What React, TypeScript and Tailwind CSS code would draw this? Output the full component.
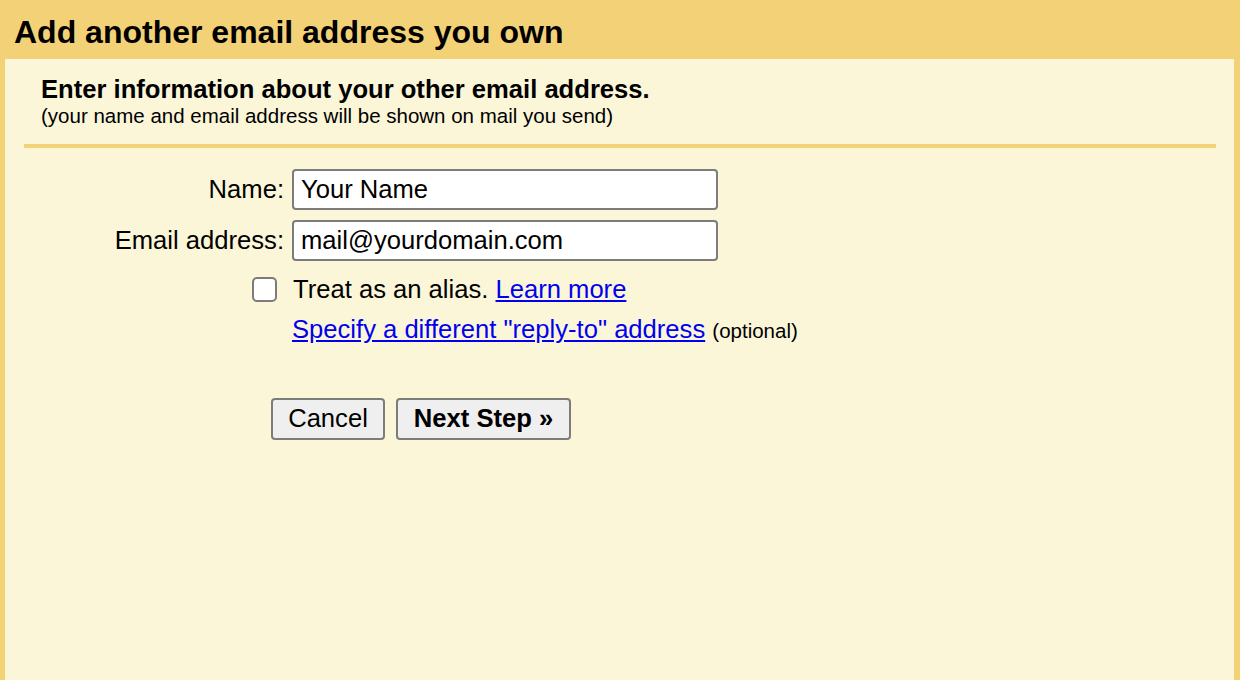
export default function App() {
  return (
    <div className="flex h-[680px] w-full flex-col overflow-hidden bg-[#f3d177] font-['Liberation_Sans',Arial,sans-serif] text-black">
      <div className="h-[59px] shrink-0 pl-[14px] pt-[16px]">
        <h1 className="text-[32px] font-bold leading-[32px]">Add another email address you own</h1>
      </div>

      <div className="ml-[5px] mr-[6px] flex-1 bg-[#fcf6d9] pt-[16px]">
        <div className="pl-[36px]">
          <h2 className="text-[25.6px] font-bold leading-[28px]">Enter information about your other email address.</h2>
          <p className="text-[20.5px] leading-[26px]">(your name and email address will be shown on mail you send)</p>
        </div>

        <div className="ml-[19px] mr-[18px] mt-[15px] h-[4px] bg-[#f3d177]" />

        <div className="mt-[21px] grid grid-cols-[279px_426px] gap-x-[8px] text-[25.6px]">
          <label className="flex h-[41px] items-center justify-end">Name:</label>
          <input
            type="text"
            defaultValue="Your Name"
            className="h-[41px] rounded-[4px] border-2 border-[#7c7c7c] bg-white px-[7px] text-[25.6px] outline-none"
          />

          <label className="mt-[10px] flex h-[41px] items-center justify-end">Email address:</label>
          <input
            type="text"
            defaultValue="mail@yourdomain.com"
            className="mt-[10px] h-[41px] rounded-[4px] border-2 border-[#7c7c7c] bg-white px-[7px] text-[25.6px] outline-none"
          />

          <div className="mt-[13px] flex h-[30px] items-center justify-end pr-[7px]">
            <span className="block h-[25px] w-[25px] rounded-[5px] border-2 border-[#7c7c7c] bg-white" />
          </div>
          <div className="mt-[13px] pl-[1px] leading-[30px]">
            Treat as an alias.{" "}
            <a href="#" className="text-[#0000ee] underline">
              Learn more
            </a>
          </div>

          <div />
          <div className="mt-[10px] whitespace-nowrap leading-[30px]">
            <a href="#" className="text-[#0000ee] underline">
              Specify a different "reply-to" address
            </a>{" "}
            <span className="text-[20.5px]">(optional)</span>
          </div>
        </div>

        <div className="ml-[266px] mt-[52px] flex gap-[11px] text-[25.6px]">
          <button
            type="button"
            className="h-[42px] w-[114px] rounded-[4px] border-2 border-[#7c7c7c] bg-[#efefef] leading-none"
          >
            Cancel
          </button>
          <button
            type="button"
            className="h-[42px] w-[175px] rounded-[4px] border-2 border-[#7c7c7c] bg-[#efefef] font-bold leading-none"
          >
            Next Step »
          </button>
        </div>
      </div>
    </div>
  );
}
